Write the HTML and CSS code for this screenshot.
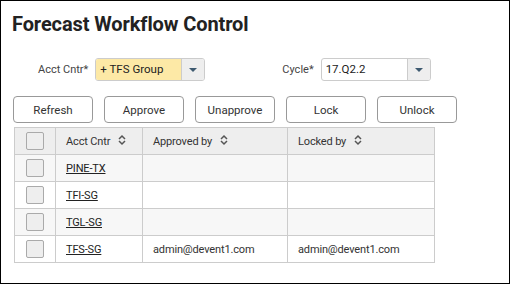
FILE: index.html
```html
<!DOCTYPE html>
<html lang="en">

<head>
    <meta charset="UTF-8">
    <meta name="viewport" content="width=device-width, initial-scale=1.0">
    <title>Forecast Workflow Control</title>
    <link rel="stylesheet" href="styles.css">
</head>

<body>
    <div class="panel">
        <h1 class="title">Forecast Workflow Control</h1>

        <div class="filters">
            <div class="field acct">
                <label class="field-label">Acct Cntr*</label>
                <div class="select highlighted">
                    <span class="select-value">+ TFS Group</span>
                    <span class="select-arrow"><i class="caret"></i></span>
                </div>
            </div>
            <div class="field cycle">
                <label class="field-label">Cycle*</label>
                <div class="select">
                    <span class="select-value">17.Q2.2</span>
                    <span class="select-arrow"><i class="caret"></i></span>
                </div>
            </div>
        </div>

        <div class="toolbar">
            <button class="btn">Refresh</button>
            <button class="btn">Approve</button>
            <button class="btn">Unapprove</button>
            <button class="btn">Lock</button>
            <button class="btn">Unlock</button>
        </div>

        <table class="grid">
            <colgroup>
                <col class="w-check">
                <col class="w-acct">
                <col class="w-appr">
                <col class="w-lock">
            </colgroup>
            <thead>
                <tr>
                    <th class="col-check"><span class="check"></span></th>
                    <th>Acct Cntr <svg class="sort" viewBox="0 0 10 12"><path d="M2 5 L5 2 L8 5 M2 7 L5 10 L8 7" /></svg></th>
                    <th>Approved by <svg class="sort" viewBox="0 0 10 12"><path d="M2 5 L5 2 L8 5 M2 7 L5 10 L8 7" /></svg></th>
                    <th>Locked by <svg class="sort" viewBox="0 0 10 12"><path d="M2 5 L5 2 L8 5 M2 7 L5 10 L8 7" /></svg></th>
                </tr>
            </thead>
            <tbody>
                <tr>
                    <td class="col-check"><span class="check"></span></td>
                    <td><a href="#">PINE-TX</a></td>
                    <td></td>
                    <td></td>
                </tr>
                <tr>
                    <td class="col-check"><span class="check"></span></td>
                    <td><a href="#">TFI-SG</a></td>
                    <td></td>
                    <td></td>
                </tr>
                <tr>
                    <td class="col-check"><span class="check"></span></td>
                    <td><a href="#">TGL-SG</a></td>
                    <td></td>
                    <td></td>
                </tr>
                <tr>
                    <td class="col-check"><span class="check"></span></td>
                    <td><a href="#">TFS-SG</a></td>
                    <td>admin@devent1.com</td>
                    <td>admin@devent1.com</td>
                </tr>
            </tbody>
        </table>
    </div>
</body>

</html>
```

FILE: styles.css
```css
* {
    margin: 0;
    padding: 0;
    box-sizing: border-box;
}

body {
    font-family: Roboto, 'Liberation Sans', sans-serif;
    background: #ffffff;
    color: #333333;
}

.panel {
    width: 510px;
    height: 284px;
    border: 1px solid #000000;
    padding: 11px 11px 0 11px;
}

.title {
    font-size: 20px;
    font-weight: 700;
    color: #222222;
    line-height: 24px;
    letter-spacing: -0.1px;
}

.filters {
    display: flex;
    margin-top: 22px;
    height: 23px;
}

.field {
    display: flex;
    align-items: center;
}

.field-label {
    font-size: 11px;
    color: #444444;
    margin-right: 7px;
}

.acct {
    margin-left: 26px;
}

.cycle {
    margin-left: 77px;
}

.select {
    display: flex;
    width: 110px;
    height: 23px;
    border: 1px solid #cccccc;
    border-radius: 3px;
    background: #ffffff;
    overflow: hidden;
}

.select.highlighted .select-value {
    background: #fde9a6;
}

.select-value {
    flex: 1;
    font-size: 11.5px;
    color: #222222;
    line-height: 21px;
    padding-left: 4px;
}

.select-arrow {
    width: 23px;
    background: #eeeeee;
    border-left: 1px solid #cccccc;
    display: flex;
    align-items: center;
    justify-content: center;
}

.caret {
    width: 0;
    height: 0;
    border-left: 4px solid transparent;
    border-right: 4px solid transparent;
    border-top: 4px solid #3e5a70;
}

.toolbar {
    display: flex;
    gap: 11px;
    margin-top: 15px;
    margin-left: 1px;
}

.btn {
    width: 80px;
    height: 27px;
    font-family: inherit;
    font-size: 11.5px;
    color: #333333;
    background: #ffffff;
    border: 1px solid #999999;
    border-radius: 4px;
}

.grid {
    margin-top: 4px;
    margin-left: 2px;
    border-collapse: collapse;
    table-layout: fixed;
    width: 420px;
    font-size: 11px;
    letter-spacing: -0.15px;
}

.w-check {
    width: 41px;
}

.w-acct {
    width: 87px;
}

.w-appr {
    width: 145px;
}

.w-lock {
    width: 147px;
}

.grid th,
.grid td {
    border: 1px solid #cccccc;
    height: 27px;
    padding: 0 10px;
    text-align: left;
    font-weight: 400;
    color: #333333;
    white-space: nowrap;
}

.grid th {
    background: #eeeeee;
}

.grid tbody tr:nth-child(odd) td {
    background: #f7f7f7;
}

.grid .col-check {
    padding: 0;
    text-align: center;
}

.check {
    display: inline-block;
    width: 18px;
    height: 18px;
    border: 1px solid #aaaaaa;
    border-radius: 2px;
    background: #eeeeee;
    vertical-align: middle;
}

.grid a {
    color: #222222;
    text-decoration: underline;
}

.sort {
    width: 10px;
    height: 12px;
    margin-left: 4px;
    vertical-align: -1px;
    fill: none;
    stroke: #555555;
    stroke-width: 1.5;
}
```
